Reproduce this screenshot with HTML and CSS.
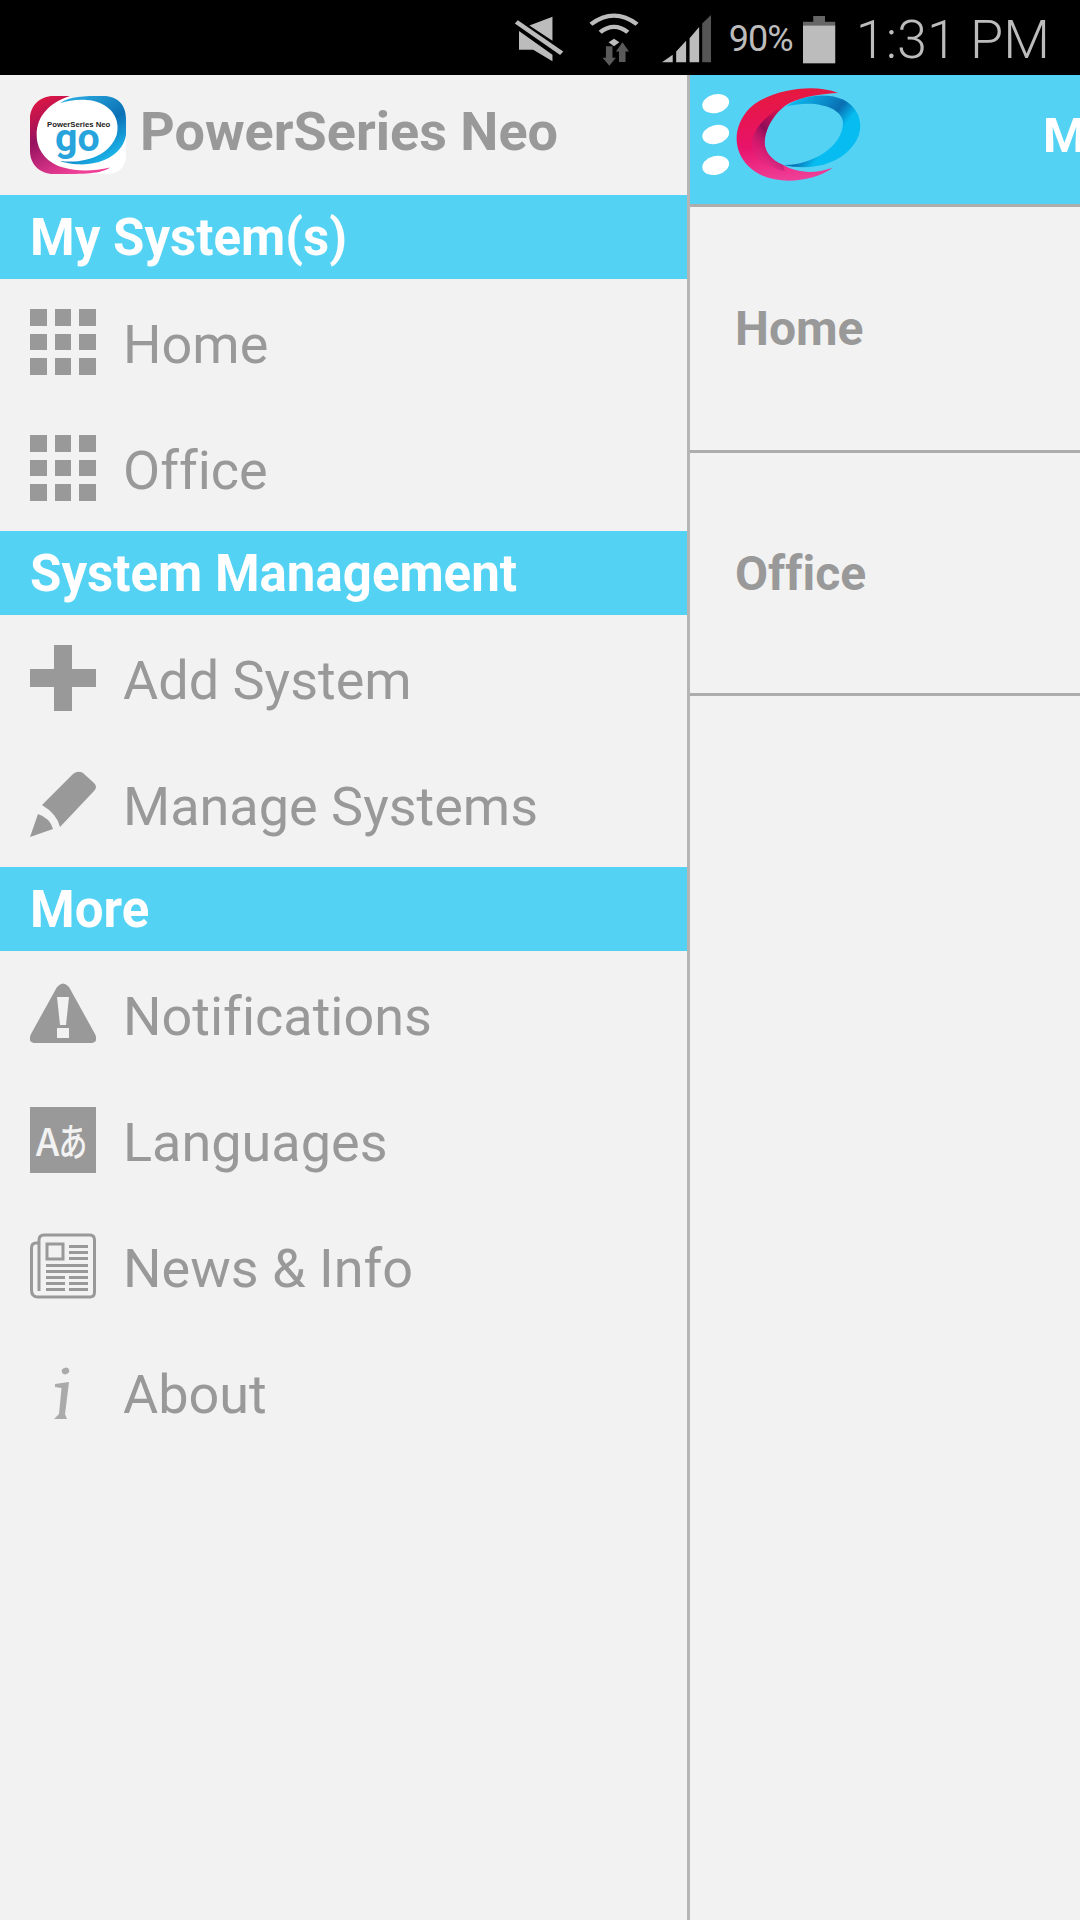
FILE: index.html
```html
<!DOCTYPE html>
<html lang="en">
<head>
<meta charset="utf-8">
<title>PowerSeries Neo</title>
<link rel="stylesheet" href="styles.css">
</head>
<body>
<div class="app">
  <header class="status">
    <svg class="st st-mute" viewBox="90 40 130 145" preserveAspectRatio="none"><path fill="#bcbcbc" d="M190 45V118L130 72ZM103 88 190 160V180L140 145H103Z"/><path fill="#bcbcbc" d="M92 66 100 56 218 150 210 161Z"/></svg>
    <svg class="st st-wifi" viewBox="285 30 130 160" preserveAspectRatio="none"><g fill="none" stroke="#bcbcbc" stroke-width="12"><path d="M290 64Q350 12 410 64"/><path d="M314 88Q350 56 386 88"/></g><path fill="#bcbcbc" d="M336 118 350 108 364 118 350 130Z"/><path fill="#5a5a5a" d="M329 130H346V165H355L338 189 320 165H329Z"/><path fill="#5a5a5a" d="M372 118 389 146H380V178H363V146H355Z"/></svg>
    <svg class="st st-signal" viewBox="475 40 128 145" preserveAspectRatio="none"><path fill="#bcbcbc" d="M475 183 503 160V183ZM512 150 538 118V183H512ZM547 110 572 76V183H547Z"/><path fill="#555" d="M580 66 603 40V183H580Z"/></svg>
    <span class="st-pct">90%</span>
    <svg class="st st-batt" viewBox="845 35 87 147" preserveAspectRatio="none"><path fill="#666" d="M872 38H903V55H930V66H845V55H872Z"/><rect fill="#bcbcbc" x="845" y="66" width="85" height="114"/></svg>
    <span class="st-time">1:31 PM</span>
  </header>
  <div class="screen">
    <nav class="drawer">
      <div class="brand">
        <svg class="brand-logo" viewBox="30 30 288 240" preserveAspectRatio="none">
          <defs>
            <linearGradient id="sb" x1="0" y1="0" x2="0.6" y2="1"><stop offset="0" stop-color="#2fb4e6"/><stop offset="0.6" stop-color="#0b70b5"/><stop offset="1" stop-color="#1cb5ea"/></linearGradient>
            <linearGradient id="sr" x1="0" y1="0" x2="0.5" y2="1"><stop offset="0" stop-color="#e8173f"/><stop offset="0.5" stop-color="#96115f"/><stop offset="1" stop-color="#ee4097"/></linearGradient>
          </defs>
          <path fill="#fff" d="M100 34H250C295 34 318 60 318 100V210C318 250 295 270 260 270H100C60 270 30 240 30 200V100C30 60 60 34 100 34Z"/>
          <path fill="url(#sb)" d="M120 52C150 30 190 30 250 30C295 30 318 60 318 100V150C310 205 250 245 170 240C140 238 125 232 120 230C200 240 270 210 290 150C305 90 260 45 200 42C170 40 145 44 120 52Z"/>
          <path fill="url(#sr)" d="M100 30H150C90 50 50 90 50 150C50 205 90 240 130 250C170 262 220 262 270 250C240 270 200 270 100 270C60 270 30 240 30 200V100C30 60 60 30 100 30Z"/>
          <text class="brand-mini" x="176" y="126" text-anchor="middle" textLength="190" lengthAdjust="spacingAndGlyphs">PowerSeries Neo</text>
          <text class="brand-go" x="172" y="200" text-anchor="middle">go</text>
        </svg>
        <span class="brand-name">PowerSeries Neo</span>
      </div>

      <div class="band">My System(s)</div>
      <a class="item">
        <svg class="icon" viewBox="0 0 66 66"><path class="ic" d="M0 0H17V17H0ZM25 0H41V17H25ZM49 0H66V17H49ZM0 25H17V41H0ZM25 25H41V41H25ZM49 25H66V41H49ZM0 49H17V66H0ZM25 49H41V66H25ZM49 49H66V66H49Z"/></svg>
        <span class="label">Home</span>
      </a>
      <a class="item">
        <svg class="icon" viewBox="0 0 66 66"><path class="ic" d="M0 0H17V17H0ZM25 0H41V17H25ZM49 0H66V17H49ZM0 25H17V41H0ZM25 25H41V41H25ZM49 25H66V41H49ZM0 49H17V66H0ZM25 49H41V66H25ZM49 49H66V66H49Z"/></svg>
        <span class="label">Office</span>
      </a>

      <div class="band">System Management</div>
      <a class="item">
        <svg class="icon" viewBox="0 0 66 66"><path class="ic" d="M24 0H42V24H66V42H42V66H24V42H0V24H24Z"/></svg>
        <span class="label">Add System</span>
      </a>
      <a class="item">
        <svg class="icon" viewBox="0 0 66 66"><path class="ic" d="M12 34 43 3Q48-1 53 2L64 12Q68 16 64 20L30 56Q27 43 12 34ZM0 66 8 43Q20 47 23 58Z"/></svg>
        <span class="label">Manage Systems</span>
      </a>

      <div class="band">More</div>
      <a class="item">
        <svg class="icon" viewBox="0 0 66 66"><path class="ic" fill-rule="evenodd" d="M27 6Q33-1 39 6L65 53Q69 62 60 62H6Q-3 62 1 53ZM27 16 30 44H36L39 16ZM27 47V57H39V47Z"/></svg>
        <span class="label">Notifications</span>
      </a>
      <a class="item">
        <span class="lang-icon"><span class="lang-a">A</span><span class="lang-k">あ</span></span>
        <span class="label">Languages</span>
      </a>
      <a class="item">
        <svg class="icon" viewBox="0 0 66 66"><g fill="none" stroke="#999" stroke-width="3"><path d="M9 58V7Q9 2 14 2H60Q64.500 2 64.500 7V59Q64.500 64 60 64H8Q1.500 64 1.500 57V15Q1.500 10 6 10H9"/><rect x="17" y="11" width="16" height="15"/></g><path class="ic" d="M39 12H58V15H39ZM39 18H58V21H39ZM39 24H58V27H39ZM16 31H58V34H16ZM16 37H58V40H16ZM16 43H35V46H16ZM39 43H58V46H39ZM16 49H35V52H16ZM39 49H58V52H39ZM16 55H35V58H16ZM39 55H58V58H39Z"/></svg>
        <span class="label">News &amp; Info</span>
      </a>
      <a class="item">
        <svg class="icon" viewBox="0 0 66 66"><ellipse class="ic-soft" cx="35.500" cy="12" rx="3.800" ry="3.200" transform="rotate(-20 35.500 12)"/><path class="ic-soft" d="M25 25 39 23 35 55 37 60H24L29 55 31.500 29 25 28Z"/></svg>
        <span class="label">About</span>
      </a>
    </nav>

    <main class="main">
      <div class="topbar">
        <svg class="top-logo" viewBox="90 40 490 310">
          <defs>
            <linearGradient id="lr" x1="0.4" y1="0" x2="0.5" y2="1"><stop offset="0" stop-color="#e5193c"/><stop offset="0.6" stop-color="#e9126a"/><stop offset="1" stop-color="#ef4099"/></linearGradient>
            <linearGradient id="li" x1="0.8" y1="0" x2="0.3" y2="0.8"><stop offset="0" stop-color="#9c0d55" stop-opacity="0"/><stop offset="0.6" stop-color="#8e0c58"/><stop offset="1" stop-color="#c8287f" stop-opacity="0.3"/></linearGradient>
            <linearGradient id="lb" x1="0.1" y1="0.1" x2="0.9" y2="0.7"><stop offset="0" stop-color="#0cb9ee"/><stop offset="0.55" stop-color="#0a6fb3"/><stop offset="0.75" stop-color="#06bcf0"/></linearGradient>
          </defs>
          <ellipse class="dot" cx="137" cy="102" rx="41" ry="28" transform="rotate(-14 137 102)"/>
          <ellipse class="dot" cx="137" cy="195" rx="41" ry="28" transform="rotate(-14 137 195)"/>
          <ellipse class="dot" cx="137" cy="288" rx="41" ry="28" transform="rotate(-14 137 288)"/>
          <path fill="url(#lb)" d="M350 110C400 72 480 70 520 90C580 120 590 190 540 240C500 285 420 305 340 287C420 290 520 235 520 160C520 115 440 88 350 110Z"/>
          <path fill="url(#lr)" d="M505 70C430 40 300 60 240 115C190 165 185 240 235 290C285 345 410 350 490 295C430 315 380 310 340 287C300 270 280 240 285 210C290 160 330 115 360 100C400 80 460 72 505 70Z"/>
          <path fill="url(#li)" d="M360 100C300 125 245 175 245 232C250 265 290 295 345 305L340 287C300 270 280 240 285 210C290 160 330 115 360 100Z"/>
        </svg>
        <span class="title">My Systems</span>
      </div>
      <div class="sys-row">Home</div>
      <div class="sys-row sys-row-last">Office</div>
    </main>
  </div>
</div>
</body>
</html>
```

FILE: styles.css
```css
* { box-sizing: border-box; }
html, body { margin: 0; padding: 0; }
body { background: #f2f2f2; font-family: Roboto, "Noto Sans CJK JP", sans-serif; font-variant-ligatures: none; }
.app { width: 1080px; height: 1920px; overflow: hidden; display: flex; flex-direction: column; }

.status { height: 75px; flex: none; background: #000; color: #bcbcbc; display: flex; align-items: center; justify-content: flex-end; padding: 3px 30px 0 0; }
.st { display: block; flex: none; }
.st-mute { width: 50px; height: 48px; }
.st-wifi { width: 50px; height: 53px; margin-left: 25px; }
.st-signal { width: 49px; height: 48px; margin-left: 23px; }
.st-pct { font-size: 36px; font-weight: 400; letter-spacing: -1px; margin-left: 18px; width: 64px; white-space: nowrap; }
.st-batt { width: 33px; height: 49px; margin-left: 10px; }
.st-time { font-size: 54px; font-weight: 300; margin-left: 20px; white-space: nowrap; }

.screen { flex: 1; display: flex; min-height: 0; }
.drawer { width: 687px; flex: none; display: flex; flex-direction: column; }
.brand { height: 120px; flex: none; display: flex; align-items: center; padding-left: 30px; }
.brand-logo { width: 96px; height: 78px; flex: none; }
.brand-name { margin: 0 0 8px 14px; font-size: 54px; font-weight: 700; color: #999; white-space: nowrap; }
.brand-mini { font-family: "Liberation Sans", sans-serif; font-size: 25px; font-weight: 700; fill: #222; }
.brand-go { font-family: Roboto, sans-serif; font-size: 118px; font-weight: 700; fill: #27a4dc; }

.band { height: 84px; flex: none; background: #53d2f3; color: #fff; font-size: 51px; font-weight: 700; display: flex; align-items: center; padding-left: 30px; white-space: nowrap; }
.item { height: 126px; flex: none; display: flex; align-items: center; padding-left: 30px; gap: 27px; color: #999; font-size: 54px; white-space: nowrap; }
.label { padding-top: 4px; }
.icon { width: 66px; height: 66px; flex: none; display: block; }
.ic { fill: #999; }
.ic-soft { fill: #aaa; }
.lang-icon { width: 66px; height: 66px; flex: none; background: #999; color: #f2f2f2; font-family: "Noto Sans CJK JP", sans-serif; font-weight: 500; display: flex; align-items: center; justify-content: center; }
.lang-a { font-size: 38px; line-height: 1; }
.lang-k { font-size: 34px; line-height: 1; display: inline-block; transform: scale(.85, 1.15); margin-left: -3px; }

.main { flex: 1; min-width: 0; border-left: 3px solid #b5b5b5; overflow: hidden; display: flex; flex-direction: column; }
.topbar { height: 132px; flex: none; background: #53d2f3; border-bottom: 3px solid #adadad; display: flex; align-items: flex-start; padding: 8px 0 0 10px; }
.top-logo { width: 163px; height: 103px; flex: none; display: block; }
.dot { fill: #fff; }
.title { margin: 24px 0 0 180px; color: #fff; font-size: 49px; font-weight: 700; white-space: nowrap; }
.sys-row { height: 246px; flex: none; border-bottom: 3px solid #adadad; display: flex; align-items: center; padding-left: 45px; color: #999; font-size: 48px; font-weight: 700; }
.sys-row-last { height: 243px; }
```
